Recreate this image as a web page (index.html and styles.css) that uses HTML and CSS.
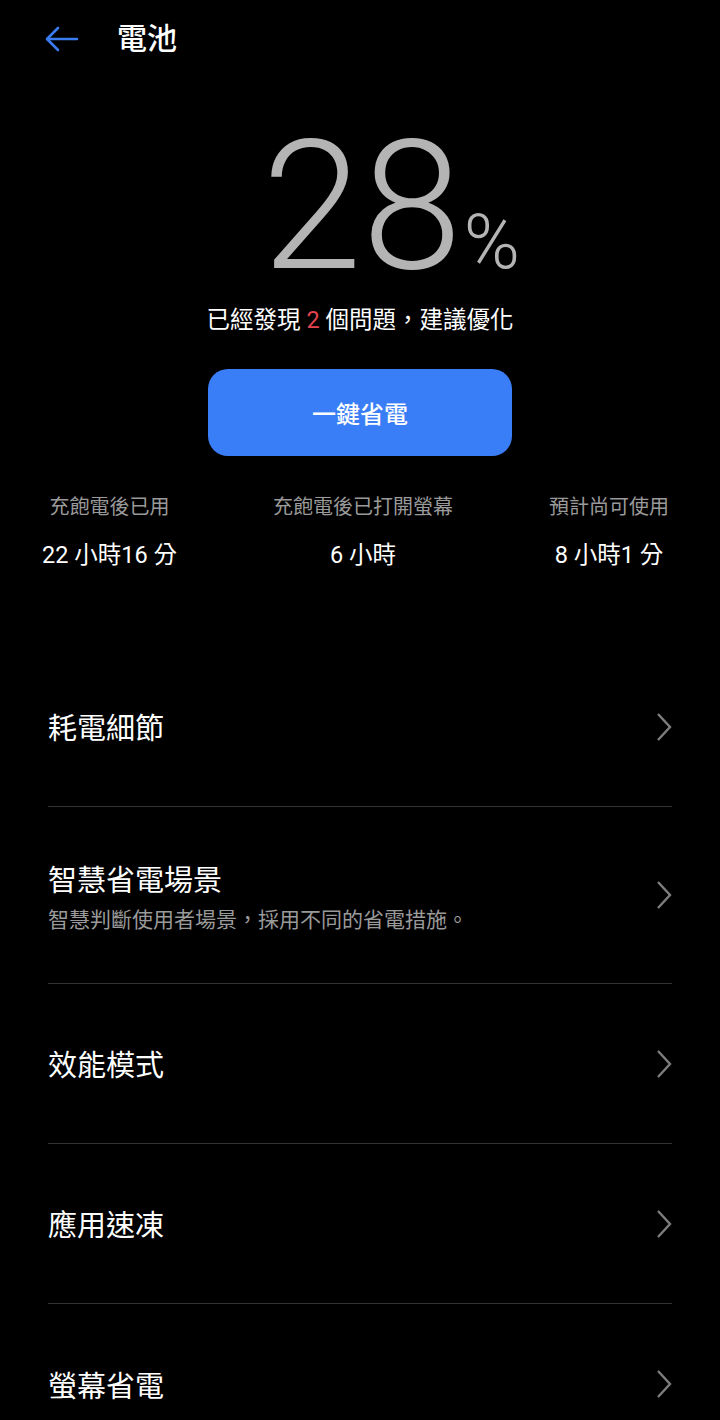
FILE: index.html
```html
<!DOCTYPE html>
<html lang="zh-Hant">
<head>
  <meta charset="UTF-8" />
  <meta name="viewport" content="width=device-width, initial-scale=1.0" />
  <title>電池</title>
  <link rel="stylesheet" href="styles.css">
</head>
<body>
  <div class="header">
    <svg class="back" width="34" height="26" viewBox="0 0 34 26">
      <path d="M32 13H3M13 2L2 13L13 24" fill="none" stroke="#3b7bf0" stroke-width="2.6" stroke-linecap="round" stroke-linejoin="round"/>
    </svg>
    <div class="title">電池</div>
  </div>

  <div class="level"><span class="num">28</span><span class="pct">%</span></div>
  <div class="hint">已經發現 <span class="red">2</span> 個問題，建議優化</div>

  <div class="btn-wrap">
    <button class="save">一鍵省電</button>
  </div>

  <div class="stats">
    <div class="stat">
      <div class="label">充飽電後已用</div>
      <div class="value">22 小時16 分</div>
    </div>
    <div class="stat">
      <div class="label">充飽電後已打開螢幕</div>
      <div class="value">6 小時</div>
    </div>
    <div class="stat">
      <div class="label">預計尚可使用</div>
      <div class="value">8 小時1 分</div>
    </div>
  </div>

  <div class="list">
    <div class="row">
      <div class="text"><div class="name">耗電細節</div></div>
      <svg class="chev" width="16" height="30" viewBox="0 0 16 30"><path d="M2 2L14 15L2 28" fill="none" stroke="#7d7d7d" stroke-width="2.4"/></svg>
    </div>
    <div class="row tall">
      <div class="text">
        <div class="name">智慧省電場景</div>
        <div class="sub">智慧判斷使用者場景，採用不同的省電措施。</div>
      </div>
      <svg class="chev" width="16" height="30" viewBox="0 0 16 30"><path d="M2 2L14 15L2 28" fill="none" stroke="#7d7d7d" stroke-width="2.4"/></svg>
    </div>
    <div class="row">
      <div class="text"><div class="name">效能模式</div></div>
      <svg class="chev" width="16" height="30" viewBox="0 0 16 30"><path d="M2 2L14 15L2 28" fill="none" stroke="#7d7d7d" stroke-width="2.4"/></svg>
    </div>
    <div class="row">
      <div class="text"><div class="name">應用速凍</div></div>
      <svg class="chev" width="16" height="30" viewBox="0 0 16 30"><path d="M2 2L14 15L2 28" fill="none" stroke="#7d7d7d" stroke-width="2.4"/></svg>
    </div>
    <div class="row">
      <div class="text"><div class="name">螢幕省電</div></div>
      <svg class="chev" width="16" height="30" viewBox="0 0 16 30"><path d="M2 2L14 15L2 28" fill="none" stroke="#7d7d7d" stroke-width="2.4"/></svg>
    </div>
  </div>
</body>
</html>
```

FILE: styles.css
```css
* { box-sizing: border-box; }
body, html {
  margin: 0;
  padding: 0;
  background: #000;
  color: #fff;
  font-family: Roboto, "Noto Sans CJK TC", sans-serif;
}
body {
  height: 1420px;
  overflow: hidden;
}
.header {
  display: flex;
  align-items: center;
  height: 78px;
  padding-left: 45px;
  gap: 38px;
}
.back { display: block; }
.title {
  font-size: 30px;
  font-weight: 500;
  line-height: 40px;
}
.level {
  display: flex;
  justify-content: center;
  align-items: baseline;
  margin-top: 39px;
  color: #b4b4b4;
  font-weight: 300;
  height: 180px;
  padding-left: 62px;
}
.num {
  font-size: 180px;
  line-height: 180px;
}
.pct {
  font-size: 76px;
  line-height: 1;
  margin-left: 2px;
}
.hint {
  margin-top: 7px;
  text-align: center;
  font-size: 23.5px;
  line-height: 32px;
}
.red { color: #e5434f; }
.btn-wrap {
  display: flex;
  justify-content: center;
  margin-top: 33px;
}
.save {
  width: 304px;
  height: 87px;
  border: none;
  border-radius: 20px;
  background: #3a7ef7;
  color: #fff;
  font-family: inherit;
  font-size: 24px;
  font-weight: 500;
}
.stats {
  display: flex;
  justify-content: space-between;
  padding: 0 51px 0 42px;
  margin-top: 37px;
}
.stat { text-align: center; }
.label {
  font-size: 20px;
  line-height: 28px;
  color: #9a9a9a;
}
.value {
  margin-top: 18px;
  font-size: 23.5px;
  line-height: 32px;
}
.list {
  margin: 76px 48px 0;
}
.row {
  display: flex;
  align-items: center;
  justify-content: space-between;
  height: 160px;
  border-bottom: 1px solid #333;
}
.row.tall { height: 177px; }
.row:last-child { border-bottom: none; }
.text { padding-top: 5px; }
.name {
  font-size: 29px;
  line-height: 38px;
}
.sub {
  margin-top: 6px;
  font-size: 21px;
  line-height: 28px;
  color: #9a9a9a;
}
.chev { display: block; }
```
